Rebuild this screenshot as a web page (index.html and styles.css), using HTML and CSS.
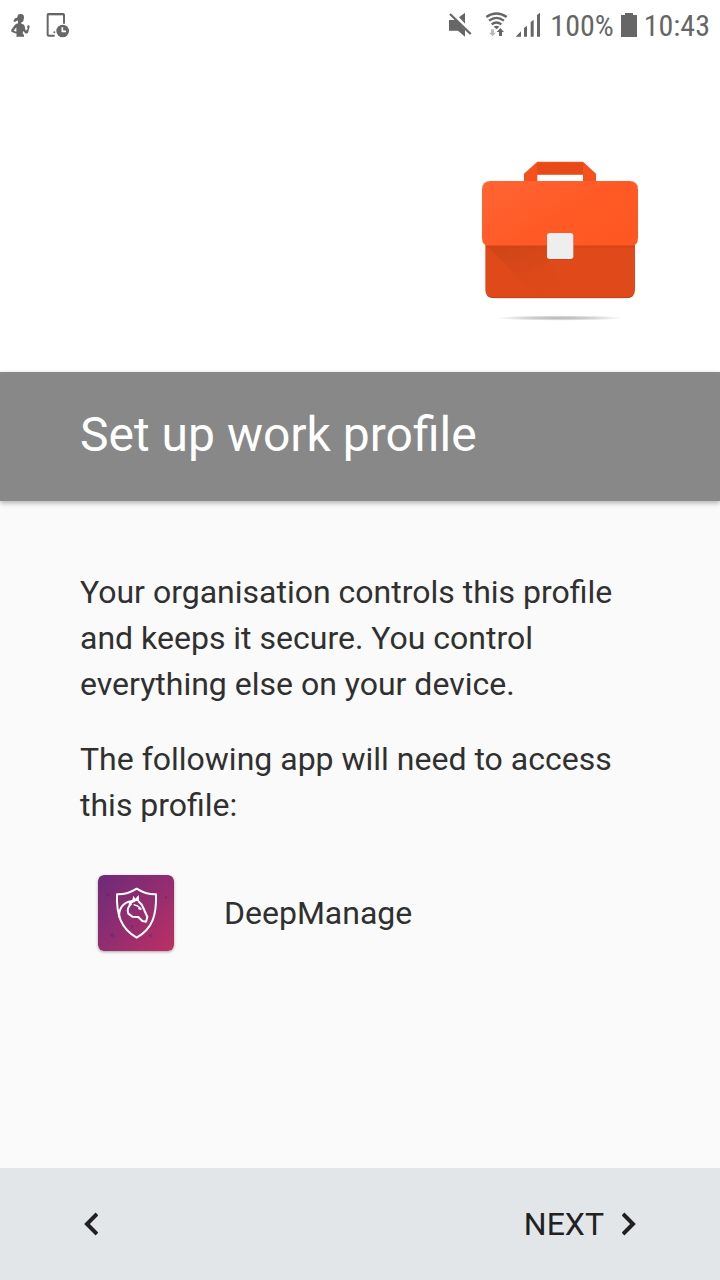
FILE: index.html
```html
<!DOCTYPE html>
<html lang="en-GB">
<head>
<meta charset="utf-8">
<meta name="viewport" content="width=device-width, initial-scale=1">
<title>Set up work profile</title>
<link rel="stylesheet" href="styles.css">
</head>
<body>
<div class="screen">
  <div class="status">
    <div class="status-group">
      <svg class="glyph" width="90" height="50" viewBox="0 0 270 150" aria-hidden="true">
        <path d="M54 44q6-4 13-1q6 3 5 10l-2 10q-2 4-6 4v4q9 1 10 7l3 14 6-5-2-9 6-3 2 5-5 18q-4 5-9 1l-5-6-2 6 4 7v4H49l1-9-13-4q-6-3-3-8l8-11q5-7 12-8v-5l-2-4-5 4q-6 1-7-1l3-6q3-6 8-4zM49 82l-8 10 8 3z"/>
        <path d="M164 107h-18q-3 0-3-3V45q0-3 3-3h43q3 0 3 3v26" fill="none" stroke="currentColor" stroke-width="6"/>
        <path d="M143 40h49v6h-49z"/>
        <circle cx="163" cy="97" r="3"/>
        <circle cx="188" cy="93" r="19"/>
        <path d="M187 82v12h11" fill="none" stroke="#fff" stroke-width="5"/>
      </svg>
    </div>
    <div class="status-group status-right">
      <svg class="glyph" width="120" height="50" viewBox="0 0 360 150" aria-hidden="true">
        <path d="M54 60h20l28 29v21L81 92H54zM84 52l18-14v33z"/>
        <path d="M62 38l58 56" fill="none" stroke="#fff" stroke-width="5"/>
        <path d="M57 42l62 60" fill="none" stroke="currentColor" stroke-width="7"/>
        <g fill="none" stroke="currentColor" stroke-width="7">
          <path d="M166 51q30-21 61 0M174 62q22-17 45 0M182 73q14-11 29 0"/>
        </g>
        <path d="M188 80q8-5 17 0l-8 8z"/>
        <path fill="#bbb" d="M180 88h9v10h6l-10 11-11-11h6z"/>
        <path d="M208 84l11 12h-6v12h-9V96h-7z"/>
        <path d="M254 110l16-16v16zM279 84l9-7v33h-9zM299 66l9-7v51h-9zM318 45l9-7v72h-9z"/>
      </svg>
      <span>100%</span>
      <svg class="battery" width="16" height="26" viewBox="0 0 16 26" aria-hidden="true"><path d="M0 3h4V1h8v2h4v22H0z"/></svg>
      <time>10:43</time>
    </div>
  </div>
  <header>
    <div class="hero">
      <svg width="180" height="180" viewBox="0 0 540 540" role="img" aria-label="Work briefcase">
        <defs>
          <linearGradient id="flap" x2="1" y2=".7"><stop stop-color="#ff6434"/><stop offset=".6" stop-color="#ff5a25"/><stop offset="1" stop-color="#ff5722"/></linearGradient>
          <linearGradient id="shade" x2=".7" y2="1"><stop stop-color="#c64317"/><stop offset=".65" stop-color="#dc4819"/><stop offset="1" stop-color="#e04a1a"/></linearGradient>
          <linearGradient id="edge" x2="0" y2="1"><stop stop-color="#b73a13"/><stop offset="1" stop-color="#de4919" stop-opacity="0"/></linearGradient>
          <radialGradient id="ground"><stop stop-color="#b4b4b4"/><stop offset=".5" stop-color="#d0d0d0"/><stop offset="1" stop-color="#fff"/></radialGradient>
        </defs>
        <ellipse cx="269" cy="504" rx="192" ry="8" fill="url(#ground)"/>
        <path fill="#f4511e" d="M162 98V71l40-36h137l39 36v27h-39V74H202v24z"/>
        <path fill="#e64a19" d="M202 39h137v34H202z"/>
        <path fill="#e04a1a" d="M46 270h449v149q0 25-25 25H71q-25 0-25-25z"/>
        <path fill="url(#shade)" d="M50 286h180v42l80 115H203z" opacity=".75"/>
        <path fill="url(#edge)" d="M48 286h444v12H48z"/>
        <path fill="url(#flap)" d="M62 93h416q26 0 26 26v144q0 26-26 26H62q-26 0-26-26V119q0-26 26-26z"/>
        <path d="M48 288h444" stroke="#d34517" stroke-width="3"/>
        <path d="M53 437q8 6 18 6h399q10 0 18-6" fill="none" stroke="#c94017" stroke-width="3"/>
        <rect x="231" y="249" width="79" height="80" rx="8" fill="#bf4720"/>
        <rect x="231" y="249" width="79" height="78" rx="8" fill="#eee"/>
      </svg>
    </div>
    <h1>Set up work profile</h1>
  </header>
  <main>
    <p>Your organisation controls this profile and keeps it secure. You control everything else on your device.</p>
    <p>The following app will need to access this profile:</p>
    <div class="app">
      <svg class="app-icon" width="76" height="76" viewBox="0 0 228 228" aria-hidden="true">
        <defs><linearGradient id="tile" x2="1" y2="1"><stop stop-color="#6d2a79"/><stop offset=".5" stop-color="#922d70"/><stop offset="1" stop-color="#bd3062"/></linearGradient></defs>
        <rect width="228" height="228" rx="16" fill="url(#tile)"/>
        <g fill="#4d1e65" opacity=".3"><circle cx="30" cy="59" r="5"/><circle cx="43" cy="181" r="6"/><circle cx="103" cy="154" r="4"/><circle cx="158" cy="181" r="5"/><circle cx="204" cy="68" r="4"/></g>
        <g fill="none" stroke="#fff" stroke-linejoin="round">
          <path stroke-width="6" d="M116 41q28 18 58 17c2 62-10 103-58 130-47-27-61-68-59-130q31 1 59-17z"/>
          <path stroke-width="6" d="M64 128c-3-28 13-47 38-50"/>
          <path stroke-width="6" d="M122 80q9 6 14 19l12 27-4 14-11-2-12-12-18-1-12-9q-6-18 9-30"/>
          <path stroke-width="4" d="M107 89l12 4 11 9M121 100l9 4"/>
        </g>
        <path fill="#fff" d="M94 80l9-6 3-12 6 9 10-11 2 21-9-3-13 7-9 11-1-9z"/>
      </svg>
      <span>DeepManage</span>
    </div>
  </main>
  <footer>
    <button type="button" aria-label="Back"><svg width="16" height="24" viewBox="0 0 16 24" aria-hidden="true"><path d="M15 2L5 12l10 10"/></svg></button>
    <button type="button">NEXT<svg width="16" height="24" viewBox="0 0 16 24" aria-hidden="true"><path d="M1 2l10 10L1 22"/></svg></button>
  </footer>
</div>
</body>
</html>
```
FILE: styles.css
```css
* { box-sizing: border-box; }
body {
  margin: 0;
  background: #fafafa;
  color: #303030;
  font-family: Roboto, "Noto Sans", sans-serif;
  font-size: 32px;
  line-height: 46px;
}
svg { display: block; flex: none; }
.screen { display: flex; flex-direction: column; min-height: 100vh; }
.status {
  display: flex;
  justify-content: space-between;
  height: 50px;
  padding-right: 10px;
  background: #fff;
  color: #666;
  font-family: "Roboto Condensed", Roboto, sans-serif;
  font-size: 30px;
  line-height: 52px;
}
.status svg { fill: currentColor; }
.status-group { display: flex; }
.status-right { gap: 7px; }
.status-right .glyph { margin-right: -8px; }
.battery { margin-top: 12px; }
header { background: #fff; }
.hero { display: flex; justify-content: flex-end; padding: 100px 70px 42px; }
h1 {
  margin: 0;
  padding: 31px 80px 34px;
  background: #888;
  box-shadow: 0 2px 5px rgba(0, 0, 0, .3);
  color: #fff;
  font-size: 48px;
  font-weight: 400;
  line-height: 64px;
}
main { flex: 1; padding: 68px 80px 40px; }
p { margin: 0 0 29px; }
.app { display: flex; align-items: center; gap: 50px; padding: 18px 18px 0; }
.app-icon { border-radius: 6px; box-shadow: 0 1px 3px rgba(0, 0, 0, .35); }
footer {
  display: flex;
  justify-content: space-between;
  align-items: center;
  min-height: 112px;
  padding: 0 82px;
  background: #e2e6e9;
}
button {
  display: flex;
  align-items: center;
  gap: 18px;
  padding: 0;
  border: 0;
  background: none;
  color: #212121;
  font: inherit;
  cursor: pointer;
}
button path { fill: none; stroke: currentColor; stroke-width: 4; }
```
